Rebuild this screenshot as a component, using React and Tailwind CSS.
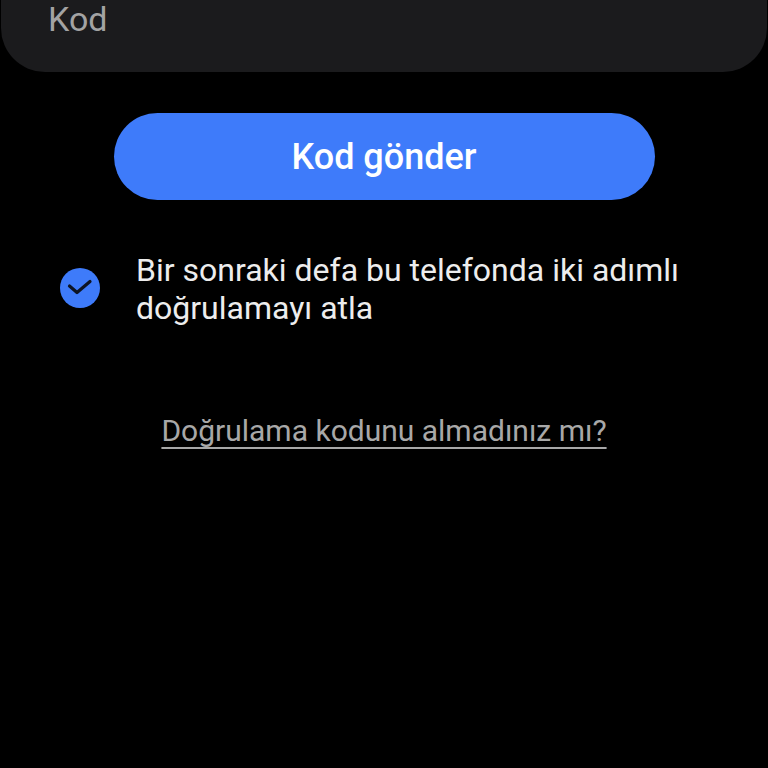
import React from "react";

export default function App() {
  return (
    <div
      className="relative h-[768px] w-[768px] overflow-hidden bg-black"
      style={{ fontFamily: "Roboto, 'Noto Sans', sans-serif" }}
    >
      {/* code input field, scrolled so only its lower part shows */}
      <div className="mx-[1px] flex h-[72px] items-start rounded-b-[44px] bg-[#1b1b1d] pl-[47px]">
        <span className="text-[34px] leading-[38px] text-[#a3a3a3]">Kod</span>
      </div>

      <div className="mt-[41px] flex justify-center">
        <button className="flex h-[87px] w-[541px] items-center justify-center rounded-full bg-[#3e7bfa] text-[36px] font-medium text-white">
          Kod gönder
        </button>
      </div>

      <div className="mt-[48px] flex items-center pl-[60px]">
        <div className="h-[40px] w-[40px] shrink-0 rounded-full bg-[#3e7bfa]">
          <svg width="40" height="40" viewBox="0 0 40 40" fill="none">
            <path
              d="M9.5 18 L17 24.5 L30 13.5"
              stroke="#0d1424"
              strokeWidth="3.2"
              strokeLinecap="round"
              strokeLinejoin="round"
            />
          </svg>
        </div>
        <p className="ml-[36px] mt-[3px] text-[32px] leading-[38px] text-[#ededed]">
          Bir sonraki defa bu telefonda iki adımlı
          <br />
          doğrulamayı atla
        </p>
      </div>

      <div className="mt-[85px] flex justify-center">
        <a className="text-[30px] leading-[38px] text-[#a8a8a8] underline decoration-[2px] underline-offset-[6px]">
          Doğrulama kodunu almadınız mı?
        </a>
      </div>
    </div>
  );
}
